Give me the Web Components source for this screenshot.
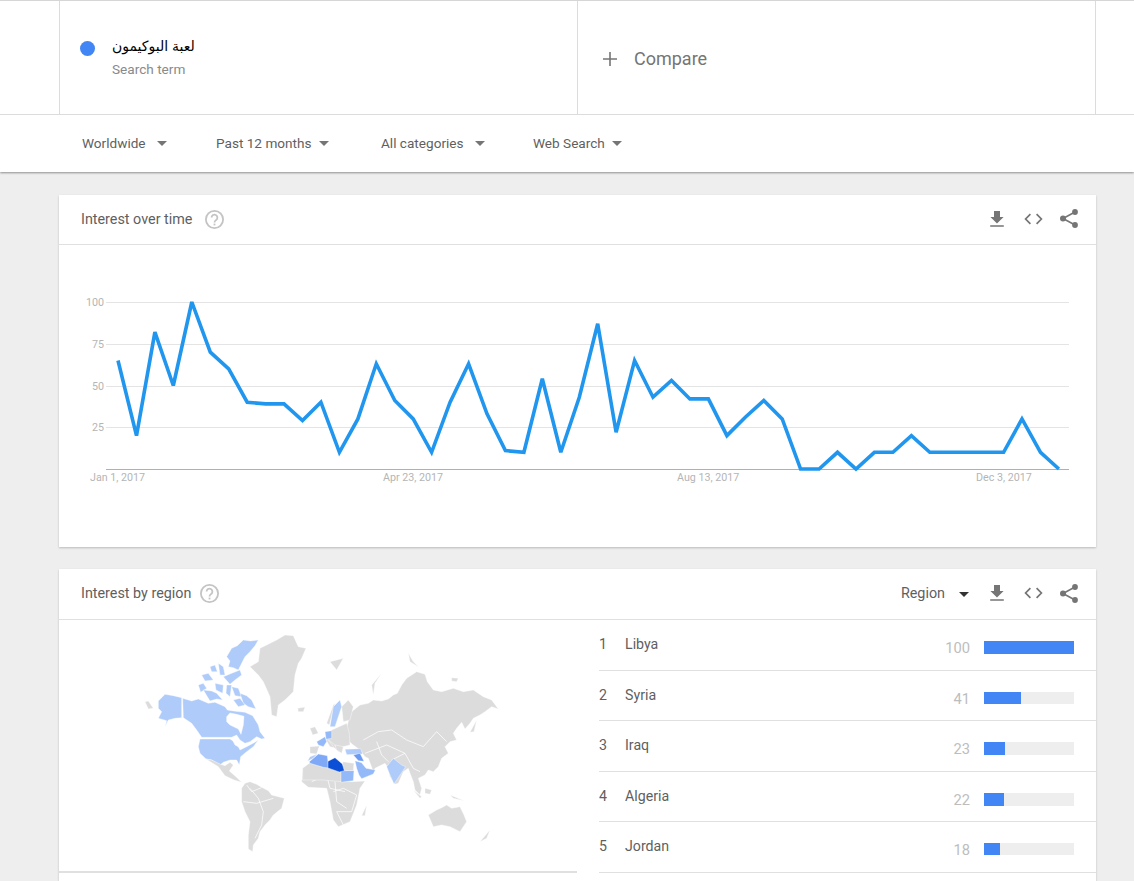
<!DOCTYPE html>
<html lang="en">
<head>
<meta charset="utf-8">
<title>Google Trends</title>
<style>
  html, body { margin: 0; background: #eeeeee; font-family: Roboto, "Liberation Sans", sans-serif; }
  body { height: 881px; overflow: hidden; }
</style>
</head>
<body>
  <gt-header>
    <gt-term slot="terms" label="لعبة البوكيمون" sub="Search term"></gt-term>
    <gt-compare slot="terms"></gt-compare>
    <gt-filter slot="filters">Worldwide</gt-filter>
    <gt-filter slot="filters" tight>Past 12 months</gt-filter>
    <gt-filter slot="filters">All categories</gt-filter>
    <gt-filter slot="filters" tight>Web Search</gt-filter>
  </gt-header>

  <gt-card heading="Interest over time" style="margin-top:23px; height:352px;" help-gap="13">
    <gt-actions slot="actions"></gt-actions>
    <gt-chart></gt-chart>
  </gt-card>

  <gt-card heading="Interest by region" style="margin-top:22px; height:312px; --head-h:50px;" help-gap="9">
    <gt-actions slot="actions" menu="Region"></gt-actions>
    <gt-region-panel>
      <gt-map slot="map"></gt-map>
      <gt-region-row rank="1" name="Libya" value="100" fill="90" tall></gt-region-row>
      <gt-region-row rank="2" name="Syria" value="41" fill="37"></gt-region-row>
      <gt-region-row rank="3" name="Iraq" value="23" fill="21" tall></gt-region-row>
      <gt-region-row rank="4" name="Algeria" value="22" fill="20" tall></gt-region-row>
      <gt-region-row rank="5" name="Jordan" value="18" fill="16"></gt-region-row>
    </gt-region-panel>
  </gt-card>

<script>
/* Top white block: search terms plus filter bar */
class GtHeader extends HTMLElement {
  constructor() {
    super();
    this.attachShadow({ mode: 'open' });
    this.shadowRoot.innerHTML = `
      <style>
        :host { display: block; background: #fff; border-top: 1px solid #d6d6d6; box-shadow: 0 1px 2px rgba(0,0,0,.4); box-sizing: border-box; height: 172px; }
        .terms { display: grid; grid-template-columns: 518px 518px 1px; height: 113px; padding-left: 59px; border-bottom: 1px solid #dcdcdc; }
        .terms::after { content: ''; background: #dcdcdc; }
        .filters { display: grid; grid-template-columns: 134px 165px 152px auto; align-items: center; box-sizing: border-box; height: 57px; padding: 0 0 1px 82px; }
      </style>
      <div class="terms"><slot name="terms"></slot></div>
      <div class="filters"><slot name="filters"></slot></div>
    `;
  }
}

class GtTerm extends HTMLElement {
  constructor() {
    super();
    this.attachShadow({ mode: 'open' });
    this.shadowRoot.innerHTML = `
      <style>
        :host { display: flex; align-items: flex-start; border-left: 1px solid #dcdcdc; padding: 36px 0 0 20px; }
        .dot { width: 15px; height: 15px; border-radius: 50%; background: #4285f4; margin: 4px 17px 0 0; flex-shrink: 0; }
        .label { font: 14px/18px "Liberation Sans", "DejaVu Sans", sans-serif; color: #000; }
        .sub { font-size: 13.6px; line-height: 18px; color: #8a8a8a; margin-top: 5px; }
      </style>
      <span class="dot"></span>
      <div>
        <div class="label" dir="rtl">${this.getAttribute('label')}</div>
        <div class="sub">${this.getAttribute('sub')}</div>
      </div>
    `;
  }
}

class GtCompare extends HTMLElement {
  constructor() {
    super();
    this.attachShadow({ mode: 'open' });
    this.shadowRoot.innerHTML = `
      <style>
        :host { display: flex; align-items: center; border-left: 1px solid #dcdcdc; padding: 2px 0 0 25px; font-size: 18px; color: #757575; }
        svg { margin-right: 17px; }
      </style>
      <svg width="14" height="14" viewBox="0 0 14 14"><path d="M7 0v14M0 7h14" stroke="#757575" stroke-width="1.6" fill="none"/></svg>
      <span>Compare</span>
    `;
  }
}

class GtFilter extends HTMLElement {
  constructor() {
    super();
    this.attachShadow({ mode: 'open' });
    this.shadowRoot.innerHTML = `
      <style>
        :host { display: flex; align-items: center; font-size: 13.6px; color: #5f5f5f; }
        i { width: 0; height: 0; margin-left: 11px; border: 5px solid transparent; border-top: 5px solid #757575; border-bottom: 0; }
        :host([tight]) i { margin-left: 7px; }
      </style>
      <slot></slot><i></i>
    `;
  }
}

/* White card with a title row; body comes through the slot */
class GtCard extends HTMLElement {
  constructor() {
    super();
    this.attachShadow({ mode: 'open' });
    const gap = this.getAttribute('help-gap') || 13;
    this.shadowRoot.innerHTML = `
      <style>
        :host { display: block; width: 1037px; margin-left: 59px; background: #fff; box-shadow: 0 1px 2px rgba(0,0,0,.22); }
        .head { display: flex; align-items: center; box-sizing: border-box; height: calc(var(--head-h, 49px) + 1px); padding: 0 18px 1px 22px; border-bottom: 1px solid #e0e0e0; font-size: 14.35px; color: #5f5f5f; }
        .help { margin-left: ${gap}px; display: block; }
        .fill { flex: 1; }
      </style>
      <div class="head">
        <span>${this.getAttribute('heading')}</span>
        <svg class="help" width="19" height="19" viewBox="0 0 19 19" role="img" aria-label="help">
          <circle cx="9.5" cy="9.5" r="8.6" fill="none" stroke="#c4c4c4" stroke-width="1.8"/>
          <path d="M6.6 7.6a2.9 2.9 0 1 1 4.6 2.3c-1 .8-1.7 1.2-1.7 2.6" fill="none" stroke="#c4c4c4" stroke-width="1.8"/>
          <rect x="8.6" y="13.6" width="1.8" height="1.8" fill="#c4c4c4"/>
        </svg>
        <span class="fill"></span>
        <slot name="actions"></slot>
      </div>
      <slot></slot>
    `;
  }
}

/* Download / embed / share, with an optional dropdown in front */
class GtActions extends HTMLElement {
  constructor() {
    super();
    this.attachShadow({ mode: 'open' });
    const menu = this.getAttribute('menu');
    this.shadowRoot.innerHTML = `
      <style>
        :host { display: flex; align-items: center; color: #757575; margin-top: -1px; }
        .menu { font-size: 14.35px; color: #5f5f5f; margin-right: 44px; position: relative; }
        .menu::after { content: ''; position: absolute; left: 58px; top: 7px; border: 5px solid transparent; border-top: 5px solid #333; border-bottom: 0; }
        svg { display: block; }
        .code { margin: 0 17px 0 19px; }
      </style>
      ${menu ? `<span class="menu">${menu}</span>` : ''}
      <svg width="16" height="18" viewBox="0 0 16 18"><path d="M5 1h6v6h3.6L8 13.4 1.4 7H5zM1.2 15.2h13.6v1.6H1.2z" fill="#757575"/></svg>
      <svg class="code" width="19" height="12" viewBox="0 0 19 12"><path d="M6.4 1.2 1.6 6l4.8 4.8M12.6 1.2 17.4 6l-4.8 4.8" fill="none" stroke="#757575" stroke-width="1.7"/></svg>
      <svg width="18" height="19" viewBox="0 0 18 19"><path d="M15 3 3 9.5 15 16" fill="none" stroke="#757575" stroke-width="1.6"/><circle cx="15" cy="3" r="2.9" fill="#757575"/><circle cx="3" cy="9.5" r="3" fill="#757575"/><circle cx="15" cy="16" r="2.9" fill="#757575"/></svg>
    `;
  }
}

/* Line chart. Values are the weekly series on a 0-100 scale */
class GtChart extends HTMLElement {
  constructor() {
    super();
    this.attachShadow({ mode: 'open' });
    const vals = [65,20,82,50,100,70,60,40,39,39,29,40,10,30,63,41,30,10,40,63,33,11,10,54,10,43,87,22,65,43,53,42,42,20,31,41,30,0,0,10,0,10,10,20,10,10,10,10,10,30,10,0];
    const base = 224, top = 57;
    const pts = vals.map((v, i) => `${(59 + i * 18.45).toFixed(1)},${(base - v * (base - top) / 100).toFixed(1)}`).join(' ');
    const grid = [[100, 57], [75, 99], [50, 141], [25, 182]].map(([t, y]) => `
      <line x1="47" x2="1010" y1="${y + .5}" y2="${y + .5}" stroke="#e4e4e4"/>
      <text x="45" y="${y + 4}" text-anchor="end" class="l">${t}</text>`).join('');
    const dates = [[31, 'Jan 1, 2017'], [324, 'Apr 23, 2017'], [618, 'Aug 13, 2017'], [917, 'Dec 3, 2017']].map(([x, d]) =>
      `<text x="${x}" y="236" class="l">${d}</text>`).join('');
    this.shadowRoot.innerHTML = `
      <style>
        :host { display: block; height: 302px; }
        svg { display: block; }
        .l { font: 10.7px Roboto, "Liberation Sans", sans-serif; fill: #b5b5b5; }
      </style>
      <svg width="1037" height="302" viewBox="0 0 1037 302">
        ${grid}
        <line x1="47" x2="1010" y1="224.5" y2="224.5" stroke="#b0b0b0"/>
        ${dates}
        <polyline points="${pts}" fill="none" stroke="#2196ee" stroke-width="3.6" stroke-linejoin="miter" stroke-miterlimit="3"/>
      </svg>
    `;
  }
}

/* Body of the region card: map on the left, ranking on the right */
class GtRegionPanel extends HTMLElement {
  constructor() {
    super();
    this.attachShadow({ mode: 'open' });
    this.shadowRoot.innerHTML = `
      <style>
        :host { display: grid; grid-template-columns: 518px 1fr; }
        .list { padding-left: 22px; display: grid; grid-auto-rows: 50.6px; }
      </style>
      <slot name="map"></slot>
      <div class="list"><slot></slot></div>
    `;
  }
}

class GtRegionRow extends HTMLElement {
  constructor() {
    super();
    this.attachShadow({ mode: 'open' });
    this.shadowRoot.innerHTML = `
      <style>
        :host { display: flex; align-items: flex-start; box-sizing: border-box; border-bottom: 1px solid #e0e0e0; font-size: 14.2px; color: #5f5f5f; height: 50.6px; padding-top: 16px; }
        .rank { width: 26px; }
        .name { flex: 1; }
        .val { font-size: 14.7px; color: #bdbdbd; width: 60px; text-align: right; margin-top: 3px; }
        .bar { width: 90px; height: 12px; background: #eeeeee; margin: 5px 22px 0 14px; }
        :host([tall]) .bar { height: 13px; }
        .bar b { display: block; height: 100%; background: #4285f4; width: ${this.getAttribute('fill')}px; }
      </style>
      <span class="rank">${this.getAttribute('rank')}</span>
      <span class="name">${this.getAttribute('name')}</span>
      <span class="val">${this.getAttribute('value')}</span>
      <span class="bar"><b></b></span>
    `;
  }
}

/* Hand traced world map; shapes are in crop coordinates, 3x the page size */
class GtMap extends HTMLElement {
  constructor() {
    super();
    this.attachShadow({ mode: 'open' });
    const L = '#aecbfa', S = '#93b9f9', M = '#7fa9f6', I = '#6a9af4', D = '#0b4fd6', G = '#dcdcdc';
    const west = [
      [G,'45,230 55,228 70,250 55,252'],
      [L,'85,228 105,208 130,212 155,218 155,278 135,280 115,285 105,305 110,287 85,280 95,260 85,250'],
      [L,'158,220 185,228 205,222 235,235 255,232 285,245 292,255 310,258 345,262 368,272 385,300 390,320 405,340 395,342 380,335 360,350 345,355 330,345 320,330 305,337 215,337 200,315 185,295 160,278'],
      ['#fff','290,275 300,264 320,268 342,274 340,300 333,328 325,312 300,300 290,290'],
      [L,'210,342 300,342 320,355 330,375 350,365 375,352 385,345 370,365 350,380 332,395 328,420 320,405 300,405 280,412 270,420 245,405 228,402 210,385 205,365'],
      ['#fff','305,340 320,345 340,358 330,368 315,360'],
      [L,'305,70 322,62 340,45 362,48 385,45 375,62 360,80 345,95 335,115 325,135 310,128 295,125 300,108 290,95'],
      [L,'205,180 220,175 230,190 212,202'],
      [L,'220,195 245,198 260,205 278,225 260,222 240,228'],
      [L,'215,150 235,145 250,165 225,168'],
      [L,'240,125 255,120 262,140 245,140'],
      [L,'265,115 280,125 285,150 270,150'],
      [L,'280,155 305,145 330,135 335,150 315,165 300,178'],
      [L,'290,180 305,180 300,215 288,205'],
      [L,'305,185 325,190 335,215 315,212'],
      [L,'330,205 350,212 365,225 378,252 355,245 340,235'],
      [L,'255,175 280,180 278,205 258,195'],
      [L,'310,225 330,220 345,240 325,245'],
      [G,'228,402 245,405 272,418 285,422 300,412 310,420 298,438 318,455 335,472 312,465 285,452 265,425'],
      [G,'335,490 345,475 360,470 380,478 395,487 415,497 425,510 463,520 455,550 430,570 420,585 405,600 390,620 385,640 370,660 368,680 355,672 355,630 360,590 345,560 335,530'],
      [G,'360,125 385,110 390,70 410,60 440,45 465,30 490,32 505,65 528,70 515,100 505,115 495,150 490,200 465,225 445,240 440,275 425,270 420,215 400,170 385,150'],
      [G,'503,250 525,246 520,260 505,260']
    ];
    const east = [
      [G,'112,262 125,260 150,240 175,235 190,225 215,228 235,222 250,210 262,205 275,180 290,160 320,140 345,148 352,170 370,195 395,200 430,190 460,200 490,195 520,215 545,225 565,252 545,245 525,260 510,270 490,280 480,295 465,312 455,292 440,310 430,325 440,345 420,350 405,365 415,385 395,400 385,425 370,440 355,435 345,450 325,460 335,490 330,510 315,495 310,470 300,445 295,430 280,440 265,475 255,478 240,455 232,425 225,415 195,430 190,440 175,400 165,395 150,375 130,360 112,345 105,320 115,290'],
      [G,'480,322 500,285 492,320'],
      [G,'425,158 445,160 440,170 425,168'],
      [G,'60,110 100,100 80,135'],
      [G,'295,85 310,110 325,125 300,110'],
      [G,'185,180 215,145 195,175 190,210'],
      [G,'355,570 380,555 395,548 410,540 425,550 450,545 462,570 470,590 450,620 420,605 395,600 370,605'],
      [G,'510,650 540,615 530,640'],
      [G,'155,572 170,540 165,572'],
      [G,'345,490 365,495 360,508 345,505'],
      [G,'310,495 335,515 330,520'],
      [G,'420,510 462,527 430,520'],
      [G,'-22,440 -5,425 50,440 95,470 125,470 165,468 150,490 140,540 120,590 85,605 70,585 60,530 50,490 -5,487 -25,470']
    ];
    const eur = [
      [G,'125,120 170,100 178,130 180,165 140,175 120,170 108,150'],
      [G,'155,50 175,30 190,50 180,90 160,95'],
      [G,'110,100 130,45 150,25 135,40 118,105'],
      [G,'115,150 135,165 150,190 130,170'],
      [G,'135,165 160,170 155,190 140,180'],
      [G,'60,170 88,168 80,192 60,190'],
      [G,'60,115 75,110 85,130 68,135'],
      [G,'38,235 60,218 115,232 158,243 155,275 100,270 38,270'],
      [G,'158,215 192,220 190,242 158,242'],
      [L,'120,110 130,50 150,30 155,50 135,110'],
      [S,'105,125 125,122 125,145 108,148'],
      [S,'80,155 105,140 110,155 100,170 85,165'],
      [L,'165,178 212,176 218,192 170,194'],
      [L,'52,214 60,200 82,192 70,205'],
      [M,'58,215 85,192 112,197 116,234 100,232 60,220'],
      [S,'153,242 192,242 190,272 153,277'],
      [D,'114,214 135,203 157,222 163,242 148,246 114,234'],
      [I,'190,195 210,190 222,214 205,212'],
      [S,'195,212 215,218 228,235 256,240 250,252 215,266 207,255 200,235'],
      [L,'290,230 310,205 335,225 347,230 312,282 298,250']
    ];
    const poly = list => list.map(([c, p]) => `<polygon points="${p}" fill="${c}"/>`).join('');
    this.shadowRoot.innerHTML = `
      <style>
        :host { display: block; box-sizing: border-box; height: 253px; border-bottom: 2px solid #e0e0e0; padding: 5px 0 0 71px; }
        svg { display: block; overflow: hidden; filter: blur(.35px); }
        g { stroke: #fff; stroke-width: 1.2; stroke-linejoin: round; }
        .b { fill: none; stroke-width: 2.2; }
      </style>
      <svg width="380" height="240" viewBox="130 625 380 240" role="img" aria-label="World map">
        <g transform="translate(130 625) scale(.3333)">${poly(west)}
          <polyline class="b" points="360,490 385,520 400,560 395,600 375,640"/>
          <polyline class="b" points="340,530 380,535 430,520"/>
          <polyline class="b" points="350,480 365,500 395,488"/>
        </g>
        <g transform="translate(310 625) scale(.3333)">${poly(east)}
          <polyline class="b" points="160,345 205,320 245,315 290,345 340,365 380,320 410,350"/>
          <polyline class="b" points="165,385 230,360 285,385 245,405"/>
          <polyline class="b" points="200,350 215,390 235,410"/>
          <polyline class="b" points="285,385 310,430 330,440"/>
          <polyline class="b" points="70,500 100,490 140,510 125,560 80,560"/>
          <polyline class="b" points="5,470 50,450 60,490 105,500"/>
          <polyline class="b" points="75,470 80,530 110,550"/>
          <polyline class="b" points="80,560 100,600"/>
        </g>
        <g transform="translate(290 690) scale(.3333)">${poly(eur)}</g>
      </svg>
    `;
  }
}

customElements.define('gt-header', GtHeader);
customElements.define('gt-term', GtTerm);
customElements.define('gt-compare', GtCompare);
customElements.define('gt-filter', GtFilter);
customElements.define('gt-card', GtCard);
customElements.define('gt-actions', GtActions);
customElements.define('gt-chart', GtChart);
customElements.define('gt-region-panel', GtRegionPanel);
customElements.define('gt-region-row', GtRegionRow);
customElements.define('gt-map', GtMap);
</script>
</body>
</html>
